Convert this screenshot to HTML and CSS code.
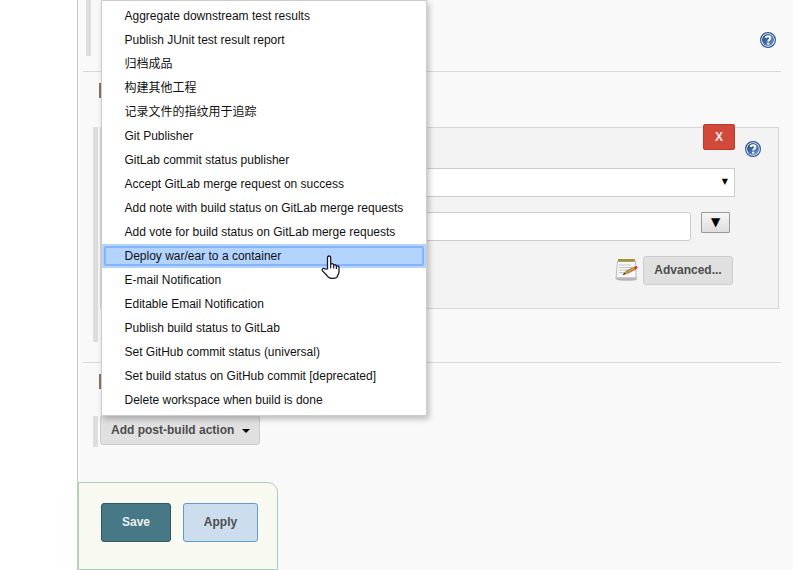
FILE: index.html
```html
<!DOCTYPE html>
<html lang="en">
<head>
<meta charset="utf-8">
<title>Job configuration</title>
<link rel="stylesheet" href="styles.css">
</head>
<body>
<svg class="defs" width="0" height="0">
  <defs>
    <linearGradient id="blue" x1="0" y1="0" x2="1" y2="1"><stop offset="0" stop-color="#1d407d"/><stop offset="1" stop-color="#6e9cd0"/></linearGradient>
    <symbol id="help" viewBox="0 0 16 16">
      <circle cx="8" cy="8" r="7.4" fill="#fff" stroke="#2d568f" stroke-width="1.2"/>
      <circle cx="8" cy="8" r="6" fill="url(#blue)"/>
      <path d="M5.7 6.1C5.7 3.6 10.4 3.6 10.4 6.1C10.4 7.7 8.2 7.7 8.2 9.5" fill="none" stroke="#fff" stroke-width="1.9"/>
      <path d="M7.2 10.7h2v2h-2z" fill="#fff"/>
    </symbol>
  </defs>
</svg>
<main class="config">
  <section class="previous">
    <span class="handle"></span>
    <svg class="help"><use href="#help"/></svg>
  </section>
  <section class="build">
    <span class="heading-mark"></span>
    <div class="chunk-row">
      <span class="handle"></span>
      <div class="chunk">
        <div class="top"><button class="delete">X</button><svg class="help"><use href="#help"/></svg></div>
        <div class="select"><span>▼</span></div>
        <div class="entry"><div class="input"></div><button class="expand">▼</button></div>
        <div class="advanced-row">
          <svg class="note" viewBox="0 0 24 24">
            <ellipse cx="12" cy="21.5" rx="10" ry="1.3" fill="#bbb"/>
            <path d="M2.5 3h17.8l1 18H1z" fill="#f8f8f8" stroke="#aaa" stroke-width=".8"/>
            <path d="M1.4 19.2h19.8v1.8H1z" fill="#bbb"/>
            <path d="M4 7h12M4 9.5h13M4 12h9M4 14.5h6" stroke="#c6c6c6"/>
            <path d="M3 1h17v2.6H3z" fill="#b7a744"/>
            <path d="M4 1v3M6 1v3M8 1v3M10 1v3M12 1v3M14 1v3M16 1v3M18 1v3" stroke="#777023" stroke-width=".7"/>
            <path d="M8 16.6l3.5-3.8 8.3-3.9 1.3 2.2-8.4 4.2z" fill="#d59a3b" stroke="#81602c" stroke-width=".7"/>
            <path d="M19 9.1l2.4-1.1q1.8.5.9 2.4l-2 1z" fill="#d73a2f"/>
            <path d="M7.6 16.8l2-2.1.8 1.6z" fill="#333"/>
          </svg>
          <button class="plain advanced">Advanced...</button>
        </div>
      </div>
    </div>
  </section>
  <section class="post">
    <span class="heading-mark"></span>
    <div class="add-row">
      <span class="handle"></span>
      <div class="anchor">
        <button class="plain add">Add post-build action<i class="caret"></i></button>
        <ul class="menu">
          <li>Aggregate downstream test results</li>
          <li>Publish JUnit test result report</li>
          <li lang="zh">归档成品</li>
          <li lang="zh">构建其他工程</li>
          <li lang="zh">记录文件的指纹用于追踪</li>
          <li>Git Publisher</li>
          <li>GitLab commit status publisher</li>
          <li>Accept GitLab merge request on success</li>
          <li>Add note with build status on GitLab merge requests</li>
          <li>Add vote for build status on GitLab merge requests</li>
          <li class="selected">Deploy war/ear to a container
            <svg class="cursor" viewBox="0 0 20 24"><path d="M6.5 14V3q0-2 1.6-2t1.6 2v6q2.5-.9 3 1 2.1-.8 2.7.9 2.6-.4 2.6 1.8v4.1q0 2.2-1.5 3.7v1q-1.4 2-5 2-4 0-5.4-2.8L1.4 15.7q-.6-1.5.6-2.2 1.3-.6 2.5.6z" fill="#fff" stroke="#1a1a2b" stroke-width="1.3"/><path d="M9.7 9v4.5M12.7 10v3.5M15.4 11v3" stroke="#1a1a2b" stroke-width="1.2"/></svg></li>
          <li>E-mail Notification</li>
          <li>Editable Email Notification</li>
          <li>Publish build status to GitLab</li>
          <li>Set GitHub commit status (universal)</li>
          <li>Set build status on GitHub commit [deprecated]</li>
          <li>Delete workspace when build is done</li>
        </ul>
      </div>
    </div>
  </section>
  <footer><button class="save">Save</button><button class="apply">Apply</button></footer>
</main>
</body>
</html>
```
FILE: styles.css
```css
* { box-sizing: border-box; }
body { margin: 0; background: #fff; font-family: "Liberation Sans", "Noto Sans CJK SC", sans-serif; font-size: 12px; overflow: hidden; }
button { font-family: inherit; font-size: 12px; font-weight: 700; padding: 0; }
.defs { position: absolute; }
.config { display: flex; flex-direction: column; height: 570px; margin-left: 77px; border-left: 1px solid #c8c8c8; background: #f9f9f9; }
section { margin: 0 12px 0 5px; }
.handle { flex: none; width: 5px; background: #ddd; }
.help { flex: none; width: 16px; height: 16px; }
.previous { display: flex; justify-content: space-between; height: 71px; padding: 0 5px 0 3px; }
.previous .handle { height: 56px; }
.previous .help { margin-top: 32px; }
.build { height: 291px; border-top: 1px solid #d9d9d9; padding: 11px 2px 0 10px; }
.heading-mark { display: block; width: 30px; height: 15px; margin-left: 6px; background: #8a7565; }
.chunk-row { display: flex; gap: 2px; height: 215px; margin-top: 29px; }
.chunk { flex: 1; height: 182px; border: 1px solid #d6d6d6; background: #f3f3f3; padding-right: 17px; }
.top { display: flex; justify-content: flex-end; gap: 10px; height: 40px; }
.top .help { margin-top: 13px; }
.delete { width: 32px; height: 26px; margin-top: -4px; border: 1px solid #bb3a2c; border-radius: 2px; background: #d24939; color: #eee; }
.select { height: 29px; margin-right: 26px; border: 1px solid #ccc; background: #fff; text-align: right; padding: 7px 6px 0 0; }
.select span, .expand { font-family: "DejaVu Sans", sans-serif; }
.select span { display: block; font-size: 8px; line-height: 12px; }
.entry { display: flex; gap: 10px; margin: 15px 31px 0 0; }
.input { flex: 1; height: 29px; border: 1px solid #ccc; border-radius: 3px; background: #fff; }
.expand { width: 29px; height: 21px; border: 1px solid #999; border-radius: 1px; background: linear-gradient(#f6f6f6, #ddd); font-size: 12px; font-weight: 400; line-height: 17px; }
.advanced-row { display: flex; justify-content: flex-end; gap: 4px; margin: 15px 28px 0 0; }
.note { width: 24px; height: 24px; margin-top: 2px; }
.plain { border: 1px solid #ccc; border-radius: 3px; background: #e0e0e0; color: #4d4d4d; }
.advanced { width: 90px; height: 29px; padding-bottom: 1px; }
.post { height: 120px; border-top: 1px solid #d9d9d9; padding: 11px 0 0 10px; }
.add-row { display: flex; gap: 2px; margin-top: 27px; }
.add-row .handle { height: 31px; }
.anchor { position: relative; }
.add { display: flex; align-items: center; justify-content: space-between; width: 160px; height: 30px; margin-top: -1px; padding: 0 9px 0 10px; }
.caret { margin-top: 2px; border: 4px solid transparent; border-top-color: #000; border-bottom: 0; }
.menu { position: absolute; left: 1px; top: -416px; width: 326px; height: 416px; margin: 0; padding: 3px 0 0; border: 1px solid #ccc; background: #fff; box-shadow: 2px 3px 6px rgba(0,0,0,.25); list-style: none; color: #111; }
.menu li { height: 24px; line-height: 24px; padding-left: 22.5px; white-space: nowrap; }
.menu .selected { position: relative; background: #b3d4ff; }
.menu .selected::before { content: ""; position: absolute; inset: 2px; border: 2px solid #86b4fc; border-radius: 2px; }
.cursor { position: absolute; left: 219px; top: 11px; width: 20px; height: 24px; }
footer { display: flex; gap: 12px; width: 200px; height: 88px; padding: 20px 0 0 22px; border: 1px solid #a9cfb9; border-radius: 0 10px 0 0; background: #f8f9f1; }
.save, .apply { height: 39px; border-radius: 3px; padding-bottom: 2px; }
.save { width: 70px; border: 1px solid #315865; background: #467886; color: #eee; }
.apply { width: 75px; border: 1px solid #6598cf; background: #ccdeee; color: #4d4d4d; }
```
